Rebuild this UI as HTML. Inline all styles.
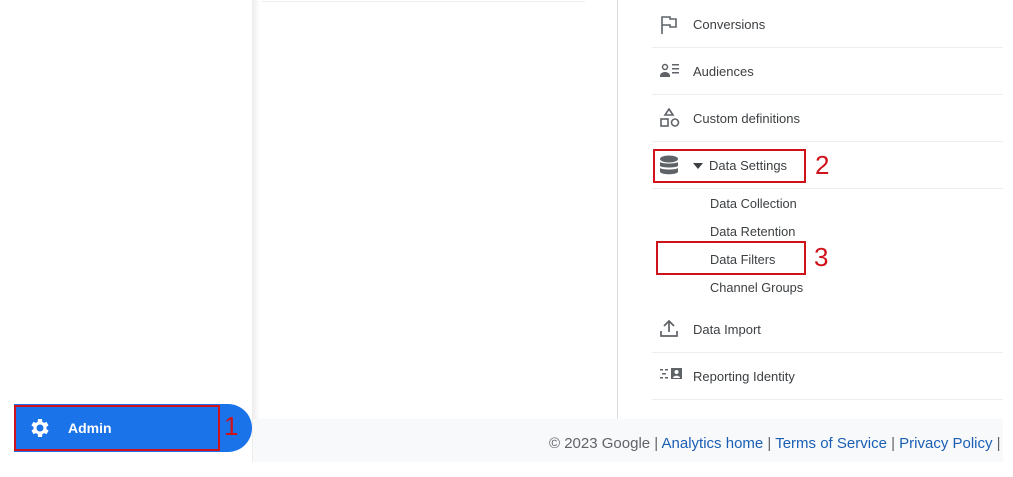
<!DOCTYPE html>
<html><head><style>
*{margin:0;padding:0;box-sizing:border-box}
body{width:1013px;height:477px;background:#fff;position:relative;overflow:hidden;font-family:"Liberation Sans",Arial,sans-serif;color:#3c4043}
.abs{position:absolute}
.row{position:absolute;left:652px;width:351px;height:47px;border-bottom:1px solid #eceef0;font-size:13px;color:#3c4043}
.row span{position:absolute;left:41px;top:16px}
.row svg{position:absolute;left:8px;top:13px}
.sub{position:absolute;left:710px;font-size:12.8px;color:#3c4043}
.red{position:absolute;border:2px solid #d0121b}
.num{position:absolute;color:#d0121b;font-size:26px;font-family:"Liberation Sans",sans-serif}
a{color:#1a5fb4;text-decoration:none}
</style></head><body>
<div class="abs" style="left:252px;top:0;width:8px;height:462px;background:linear-gradient(90deg,#ececec,#fff)"></div>
<div class="abs" style="left:262px;top:1px;width:323px;height:1px;background:#eceef0"></div>
<div class="abs" style="left:617px;top:0;width:1px;height:419px;background:#dadce0"></div>
<div class="row" style="top:1px"><svg width="18" height="20" viewBox="0 0 18 20" fill="none" stroke="#5f6368" stroke-width="1.6"><path d="M2 20V3h8v2h6v8h-6v-2H2"/></svg><span>Conversions</span></div>
<div class="row" style="top:48px"><svg width="22" height="18" viewBox="0 0 22 18" fill="#5f6368"><circle cx="5" cy="6" r="2.5" fill="none" stroke="#5f6368" stroke-width="1.5"/><path d="M0 15c0-3 3-4 5-4s5 1 5 4v1H0z"/><rect x="12" y="3" width="7" height="1.5"/><rect x="12" y="7" width="7" height="1.5"/><rect x="12" y="11" width="7" height="1.5"/></svg><span>Audiences</span></div>
<div class="row" style="top:95px"><svg width="22" height="22" viewBox="0 0 22 22" fill="none" stroke="#5f6368" stroke-width="1.6"><path d="M9 1l4 6H5z"/><rect x="1" y="11" width="7" height="7"/><circle cx="15" cy="14.5" r="3.5"/></svg><span>Custom definitions</span></div>
<div class="row" style="top:142px"><svg width="20" height="22" viewBox="0 0 20 22" fill="#5f6368"><ellipse cx="9" cy="4" rx="9" ry="3.5"/><path d="M0 7c2 2 16 2 18 0v4c-2 2-16 2-18 0z"/><path d="M0 13c2 2 16 2 18 0v4c-2 3-16 3-18 0z"/></svg><span style="left:39px;top:19px;font-size:0"><span style="position:absolute;left:2px;top:2px;width:0;height:0;border-left:5px solid transparent;border-right:5px solid transparent;border-top:6px solid #3c4043"></span></span><span style="left:57px">Data Settings</span></div>
<div class="sub" style="top:196px">Data Collection</div>
<div class="sub" style="top:224px">Data Retention</div>
<div class="sub" style="top:252px">Data Filters</div>
<div class="sub" style="top:280px">Channel Groups</div>
<div class="row" style="top:306px"><svg width="18" height="18" viewBox="0 0 18 18" fill="none" stroke="#5f6368" stroke-width="1.7"><path d="M9 13V2M4 7l5-5 5 5M1 12v5h16v-5"/></svg><span>Data Import</span></div>
<div class="row" style="top:353px"><svg width="24" height="16" viewBox="0 0 24 16" fill="#5f6368"><rect x="0" y="3" width="3" height="1.5"/><rect x="5" y="3" width="3" height="1.5"/><rect x="2" y="7" width="4" height="1.5"/><rect x="0" y="11" width="3" height="1.5"/><rect x="5" y="11" width="3" height="1.5"/><rect x="11" y="2" width="11" height="11"/><circle cx="16.5" cy="6" r="2" fill="#fff"/><path d="M13 12c0-3 7-3 7 0z" fill="#fff"/></svg><span>Reporting Identity</span></div>
<div class="abs" style="left:253px;top:419px;width:750px;height:43px;background:#f8f9fa"></div>
<div class="abs" style="left:549px;top:435px;font-size:15px;color:#5f6368;white-space:nowrap">© 2023 Google | <a>Analytics home</a> | <a>Terms of Service</a> | <a>Privacy Policy</a> |</div>
<div class="abs" style="left:14px;top:404px;width:238px;height:48px;background:#1a73e8;border-radius:0 24px 24px 0"></div>
<svg class="abs" style="left:28px;top:416px" width="24" height="24" viewBox="0 0 24 24" fill="#fff"><path d="M19.4 13a7.5 7.5 0 000-2l2.1-1.6-2-3.5-2.5 1a7 7 0 00-1.7-1L15 3h-4l-.4 2.9a7 7 0 00-1.7 1l-2.5-1-2 3.5L6.6 11a7.5 7.5 0 000 2l-2.1 1.6 2 3.5 2.5-1a7 7 0 001.7 1L11 21h4l.4-2.9a7 7 0 001.7-1l2.5 1 2-3.5zM13 15.5a3.5 3.5 0 110-7 3.5 3.5 0 010 7z" transform="translate(-1 0)"/></svg>
<div class="abs" style="left:68px;top:420px;color:#fff;font-weight:bold;font-size:14px">Admin</div>
<div class="red" style="left:14px;top:405px;width:206px;height:46px"></div>
<div class="num" style="left:224px;top:411px">1</div>
<div class="red" style="left:653px;top:149px;width:153px;height:34px"></div>
<div class="num" style="left:815px;top:150px">2</div>
<div class="red" style="left:656px;top:241px;width:150px;height:34px"></div>
<div class="num" style="left:814px;top:242px">3</div>
</body></html>
